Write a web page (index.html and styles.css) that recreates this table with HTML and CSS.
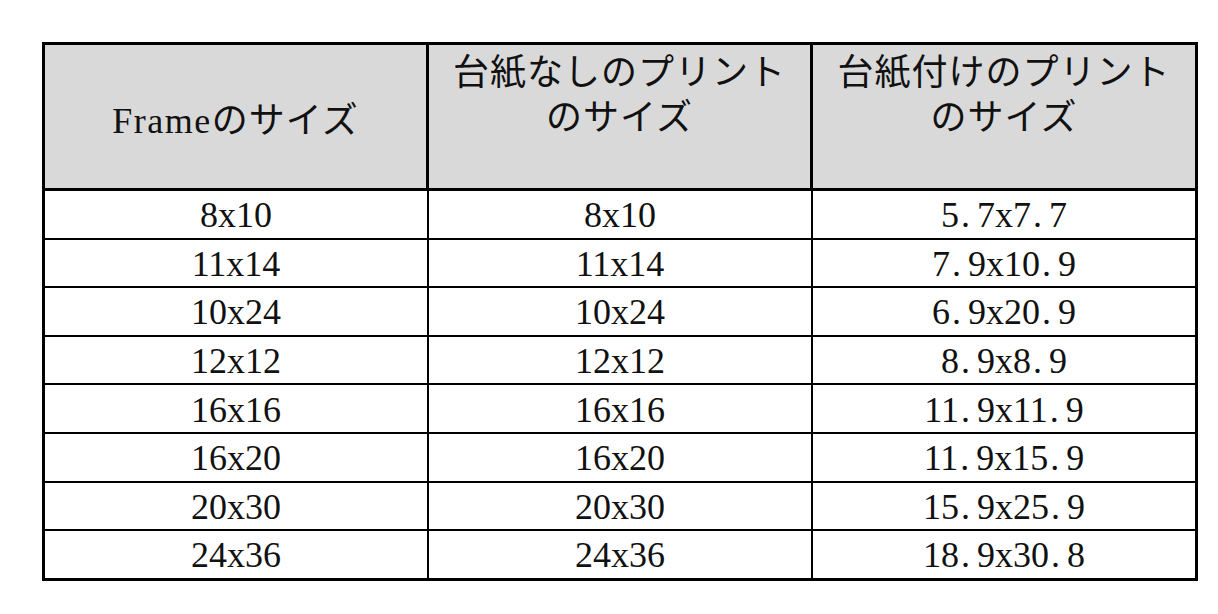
FILE: index.html
```html
<!DOCTYPE html>
<html lang="ja">
<head>
<meta charset="utf-8">
<title>Frame sizes</title>
<link rel="stylesheet" href="styles.css">
</head>
<body>
<div class="wrap">
<table class="sizes">
  <colgroup>
    <col class="c1">
    <col class="c2">
    <col class="c3">
  </colgroup>
  <thead>
    <tr>
      <th class="h-frame"><span class="lat">Frame</span><span class="jp">のサイズ</span></th>
      <th class="h-top"><span class="jp">台紙なしのプリント<br>のサイズ</span></th>
      <th class="h-top"><span class="jp">台紙付けのプリント<br>のサイズ</span></th>
    </tr>
  </thead>
  <tbody>
    <tr><td>8x10</td><td>8x10</td><td>5<span class="dt">.</span>7x7<span class="dt">.</span>7</td></tr>
    <tr><td>11x14</td><td>11x14</td><td>7<span class="dt">.</span>9x10<span class="dt">.</span>9</td></tr>
    <tr><td>10x24</td><td>10x24</td><td>6<span class="dt">.</span>9x20<span class="dt">.</span>9</td></tr>
    <tr><td>12x12</td><td>12x12</td><td>8<span class="dt">.</span>9x8<span class="dt">.</span>9</td></tr>
    <tr><td>16x16</td><td>16x16</td><td>11<span class="dt">.</span>9x11<span class="dt">.</span>9</td></tr>
    <tr><td>16x20</td><td>16x20</td><td>11<span class="dt">.</span>9x15<span class="dt">.</span>9</td></tr>
    <tr><td>20x30</td><td>20x30</td><td>15<span class="dt">.</span>9x25<span class="dt">.</span>9</td></tr>
    <tr><td>24x36</td><td>24x36</td><td>18<span class="dt">.</span>9x30<span class="dt">.</span>8</td></tr>
  </tbody>
</table>
</div>
</body>
</html>
```
FILE: styles.css
```css
html, body {
  margin: 0;
  padding: 0;
  background: #ffffff;
}

.wrap {
  padding: 42px 0 0 42px;
}

.sizes {
  width: 1156px;
  border-collapse: separate;
  border-spacing: 0;
  border: 3px solid #000;
  table-layout: fixed;
  font-family: "Liberation Serif", "Noto Sans CJK JP", serif;
  color: #111;
}

.c1 { width: 384px; }
.c2 { width: 384px; }
.c3 { width: 382px; }

.sizes th {
  height: 146px;
  padding: 0;
  background: #d9d9d9;
  font-weight: 400;
  font-size: 36px;
  line-height: 45px;
  text-align: center;
  border-bottom: 3px solid #000;
  border-right: 3px solid #000;
  box-sizing: border-box;
}

.sizes th:last-child,
.sizes td:last-child {
  border-right: none;
}

.jp {
  letter-spacing: 1px;
}

.lat {
  letter-spacing: 1.5px;
}

.sizes .h-frame {
  vertical-align: middle;
  padding-top: 10px;
}

.sizes .h-top {
  vertical-align: top;
  padding-top: 6px;
}

.sizes td {
  box-sizing: border-box;
  padding: 2px 0 0;
  height: 48.6px;
  font-size: 36px;
  line-height: 44px;
  text-align: center;
  vertical-align: middle;
  border-right: 2px solid #000;
  border-bottom: 2px solid #000;
}

.sizes tbody tr:last-child td {
  border-bottom: none;
  height: 46.6px;
}

.dt {
  display: inline-block;
  width: 0.5em;
  text-align: left;
  padding-left: 2px;
  box-sizing: border-box;
}
```
